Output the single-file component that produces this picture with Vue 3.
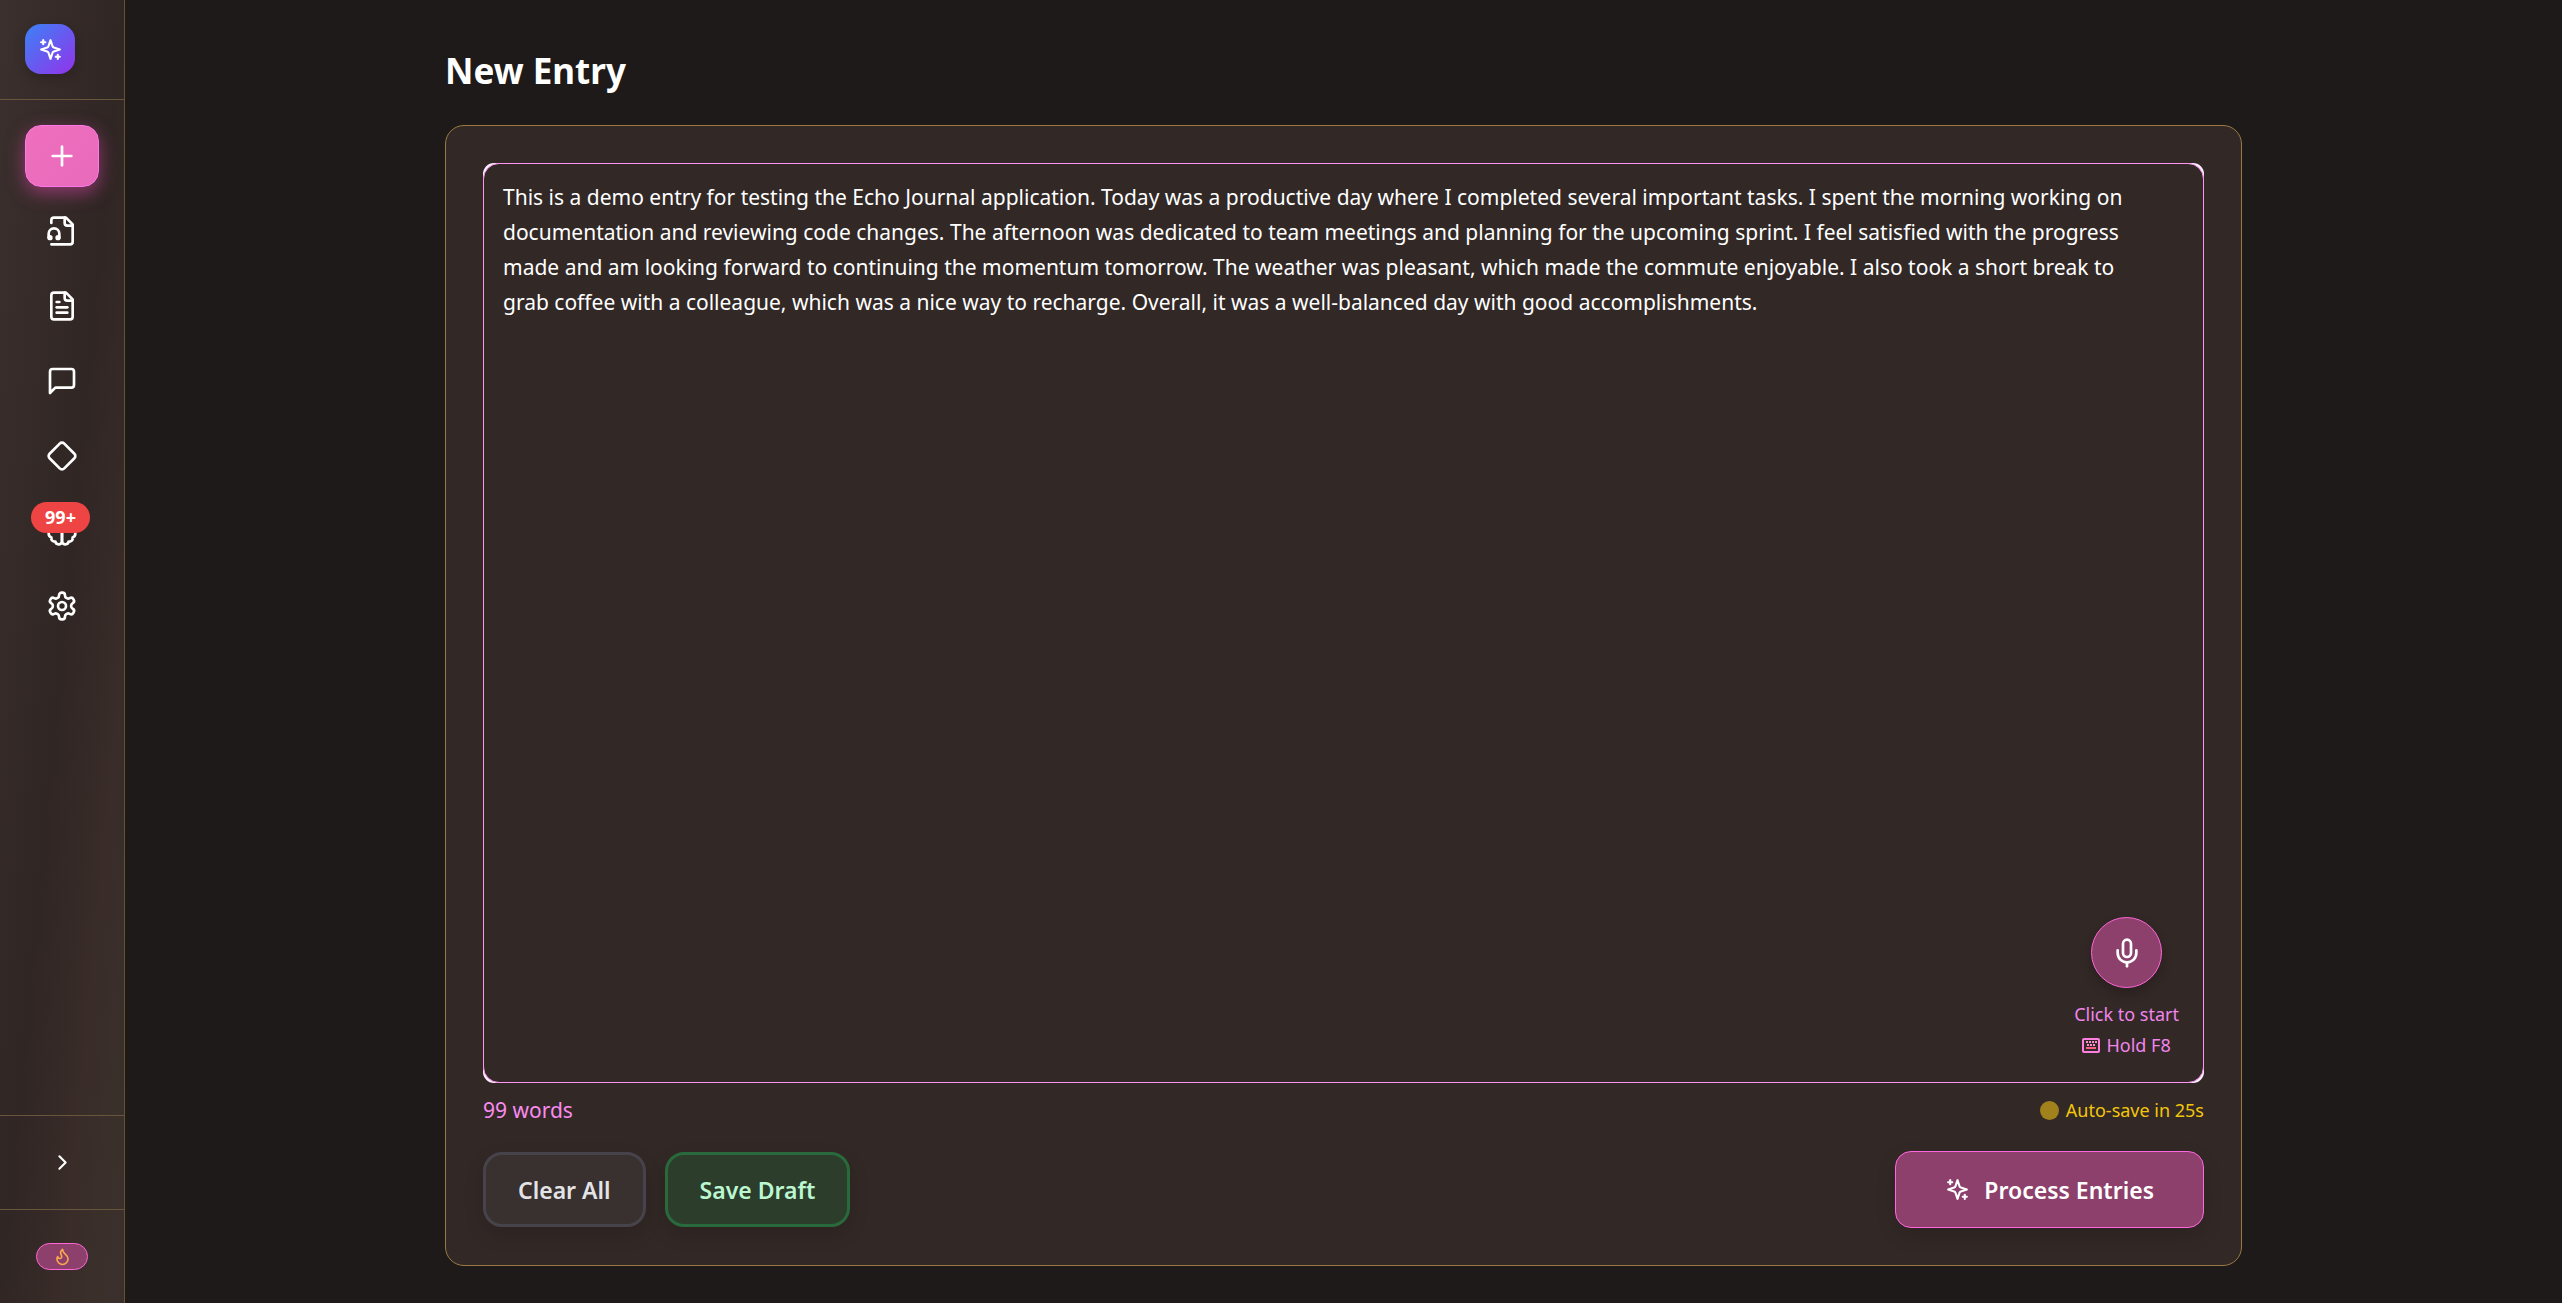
<script setup>
import { ref, computed } from 'vue'

const entry = ref(
  'This is a demo entry for testing the Echo Journal application. Today was a productive day where I completed several important tasks. I spent the morning working on documentation and reviewing code changes. The afternoon was dedicated to team meetings and planning for the upcoming sprint. I feel satisfied with the progress made and am looking forward to continuing the momentum tomorrow. The weather was pleasant, which made the commute enjoyable. I also took a short break to grab coffee with a colleague, which was a nice way to recharge. Overall, it was a well-balanced day with good accomplishments.'
)
const wordCount = ref(99)
const secondsToSave = ref(25)
const saveLabel = computed(() => `Auto-save in ${secondsToSave.value}s`)

const navItems = [
  { name: 'New entry', active: true, paths: ['M5 12h14', 'M12 5v14'] },
  {
    name: 'Audio entries',
    paths: [
      'M4 22h14a2 2 0 0 0 2-2V7l-5-5H6a2 2 0 0 0-2 2v2',
      'M14 2v4a2 2 0 0 0 2 2h4',
      'M2 17v-3a4 4 0 0 1 8 0v3',
      'M2 17a1 1 0 1 0 2 0a1 1 0 1 0-2 0',
      'M8 17a1 1 0 1 0 2 0a1 1 0 1 0-2 0'
    ]
  },
  {
    name: 'Entries',
    paths: [
      'M15 2H6a2 2 0 0 0-2 2v16a2 2 0 0 0 2 2h12a2 2 0 0 0 2-2V7Z',
      'M14 2v4a2 2 0 0 0 2 2h4',
      'M10 9H8',
      'M16 13H8',
      'M16 17H8'
    ]
  },
  { name: 'Chat', paths: ['M21 15a2 2 0 0 1-2 2H7l-4 4V5a2 2 0 0 1 2-2h14a2 2 0 0 1 2 2z'] },
  {
    name: 'Patterns',
    paths: [
      'M2.7 10.3a2.41 2.41 0 0 0 0 3.41l7.59 7.59a2.41 2.41 0 0 0 3.41 0l7.59-7.59a2.41 2.41 0 0 0 0-3.41l-7.59-7.59a2.41 2.41 0 0 0-3.41 0Z'
    ]
  },
  {
    name: 'Insights',
    badge: '99+',
    paths: [
      'M9.5 2A2.5 2.5 0 0 1 12 4.5v15a2.5 2.5 0 0 1-4.96.44 2.5 2.5 0 0 1-2.96-3.08 3 3 0 0 1-.34-5.58 2.5 2.5 0 0 1 1.32-4.24 2.5 2.5 0 0 1 1.98-3A2.5 2.5 0 0 1 9.5 2Z',
      'M14.5 2A2.5 2.5 0 0 0 12 4.5v15a2.5 2.5 0 0 0 4.96.44 2.5 2.5 0 0 0 2.96-3.08 3 3 0 0 0 .34-5.58 2.5 2.5 0 0 0-1.32-4.24 2.5 2.5 0 0 0-1.98-3A2.5 2.5 0 0 0 14.5 2Z'
    ]
  },
  {
    name: 'Settings',
    paths: [
      'M12.22 2h-.44a2 2 0 0 0-2 2v.18a2 2 0 0 1-1 1.73l-.43.25a2 2 0 0 1-2 0l-.15-.08a2 2 0 0 0-2.73.73l-.22.38a2 2 0 0 0 .73 2.73l.15.1a2 2 0 0 1 1 1.72v.51a2 2 0 0 1-1 1.74l-.15.09a2 2 0 0 0-.73 2.73l.22.38a2 2 0 0 0 2.73.73l.15-.08a2 2 0 0 1 2 0l.43.25a2 2 0 0 1 1 1.73V20a2 2 0 0 0 2 2h.44a2 2 0 0 0 2-2v-.18a2 2 0 0 1 1-1.73l.43-.25a2 2 0 0 1 2 0l.15.08a2 2 0 0 0 2.73-.73l.22-.39a2 2 0 0 0-.73-2.73l-.15-.08a2 2 0 0 1-1-1.74v-.5a2 2 0 0 1 1-1.74l.15-.09a2 2 0 0 0 .73-2.73l-.22-.38a2 2 0 0 0-2.73-.73l-.15.08a2 2 0 0 1-2 0l-.43-.25a2 2 0 0 1-1-1.73V4a2 2 0 0 0-2-2z',
      'M9 12a3 3 0 1 0 6 0a3 3 0 1 0-6 0'
    ]
  }
]

const sparkles = [
  'm12 3-1.912 5.813a2 2 0 0 1-1.275 1.275L3 12l5.813 1.912a2 2 0 0 1 1.275 1.275L12 21l1.912-5.813a2 2 0 0 1 1.275-1.275L21 12l-5.813-1.912a2 2 0 0 1-1.275-1.275L12 3Z',
  'M5 3v4',
  'M19 17v4',
  'M3 5h4',
  'M17 19h4'
]
</script>

<template>
  <div class="app">
    <aside class="sidebar">
      <div class="brand">
        <a class="logo" href="#" aria-label="Echo Journal">
          <svg class="icon icon-md" viewBox="0 0 24 24"><path v-for="d in sparkles" :key="d" :d="d" /></svg>
        </a>
      </div>
      <nav class="nav">
        <a
          v-for="item in navItems"
          :key="item.name"
          href="#"
          class="nav-item"
          :class="{ active: item.active }"
          :aria-label="item.name"
        >
          <svg class="icon icon-lg" viewBox="0 0 24 24"><path v-for="d in item.paths" :key="d" :d="d" /></svg>
          <span v-if="item.badge" class="badge">{{ item.badge }}</span>
        </a>
      </nav>
      <div class="expand">
        <button type="button" class="expand-button" aria-label="Expand sidebar">
          <svg class="icon icon-md" viewBox="0 0 24 24"><path d="m9 18 6-6-6-6" /></svg>
        </button>
      </div>
      <div class="streak">
        <span class="streak-pill">
          <svg class="icon icon-sm" viewBox="0 0 24 24">
            <path d="M8.5 14.5A2.5 2.5 0 0 0 11 12c0-1.38-.5-2-1-3-1.072-2.143-.224-4.054 2-6 .5 2.5 2 4.9 4 6.5 2 1.6 3 3.5 3 5.5a7 7 0 1 1-14 0c0-1.153.433-2.294 1-3a2.5 2.5 0 0 0 2.5 2.5z" />
          </svg>
        </span>
      </div>
    </aside>

    <main class="main">
      <div class="content">
        <h1 class="title">New Entry</h1>
        <section class="card">
          <div class="editor">
            <textarea v-model="entry" class="entry" aria-label="Journal entry" spellcheck="false"></textarea>
            <div class="recorder">
              <button type="button" class="mic" aria-label="Start recording">
                <svg class="icon icon-lg" viewBox="0 0 24 24">
                  <path d="M12 2a3 3 0 0 0-3 3v7a3 3 0 0 0 6 0V5a3 3 0 0 0-3-3Z" />
                  <path d="M19 10v2a7 7 0 0 1-14 0v-2" />
                  <path d="M12 19v3" />
                </svg>
              </button>
              <span class="hint">Click to start</span>
              <span class="hint">
                <svg class="keyboard" viewBox="0 0 18 15">
                  <rect class="frame" x="1" y="1" width="16" height="13" rx="1" />
                  <path class="keys" d="M4 4h2M7 4h2M10 4h2M13 4h2M5 7h2M8 7h2M11 7h2" />
                  <path class="space" d="M4 10h10" />
                </svg>
                Hold F8
              </span>
            </div>
          </div>
          <div class="status">
            <span class="words">{{ wordCount }} words</span>
            <span class="autosave"><i class="dot"></i>{{ saveLabel }}</span>
          </div>
          <div class="actions">
            <button type="button" class="button clear">Clear All</button>
            <button type="button" class="button save">Save Draft</button>
            <button type="button" class="button process">
              <svg class="icon icon-md" viewBox="0 0 24 24"><path v-for="d in sparkles" :key="d" :d="d" /></svg>
              Process Entries
            </button>
          </div>
        </section>
      </div>
    </main>
  </div>
</template>

<style>
body {
  margin: 0;
  background: #1e1a19;
}
</style>

<style scoped>
.app {
  display: flex;
  min-height: 100vh;
  background: #1e1a19;
  color: #fff;
  font-family: "Segoe UI", "Noto Sans", "Open Sans", sans-serif;
}
.app *,
.app {
  box-sizing: border-box;
}
.icon {
  display: block;
  flex: none;
  fill: none;
  stroke: currentColor;
  stroke-width: 2;
  stroke-linecap: round;
  stroke-linejoin: round;
}
.icon-sm { width: 19px; height: 19px; }
.icon-md { width: 25px; height: 25px; }
.icon-lg { width: 32px; height: 32px; }

.sidebar {
  display: flex;
  flex-direction: column;
  flex: none;
  width: 125px;
  border-right: 1px solid #69522f;
  background: linear-gradient(to bottom right, #3b302d 0%, #302624 50%, #392c29 75%, #3a302a 90%, #3b2f2d 100%);
}
.brand {
  height: 100px;
  padding: 24px 25px;
  border-bottom: 1px solid #69553c;
}
.logo {
  display: flex;
  align-items: center;
  justify-content: center;
  width: 50px;
  height: 50px;
  border-radius: 16px;
  background: linear-gradient(135deg, #3b82f6, #9333ea);
  box-shadow: 0 4px 12px rgba(0, 0, 0, 0.2);
  color: #fff;
}
.nav {
  display: flex;
  flex: 1;
  flex-direction: column;
  gap: 13px;
  padding: 25px;
}
.nav-item {
  position: relative;
  display: flex;
  align-items: center;
  justify-content: center;
  height: 62px;
  border-radius: 16px;
  color: #fff;
}
.nav-item.active {
  border: 1px solid #ff77e8;
  background: linear-gradient(135deg, #f06fbf, #e86aba);
  box-shadow: 0 6px 18px rgba(236, 72, 180, 0.5);
}
.badge {
  position: absolute;
  top: 2px;
  left: 6px;
  width: 59px;
  border-radius: 16px;
  background: #ef4444;
  font-size: 18px;
  font-weight: 700;
  line-height: 31px;
  text-align: center;
}
.expand {
  display: flex;
  align-items: center;
  justify-content: center;
  height: 94px;
  border-top: 1px solid #69553c;
}
.expand-button {
  padding: 12px;
  border: 0;
  background: none;
  color: #fff;
}
.streak {
  display: flex;
  align-items: center;
  justify-content: center;
  height: 94px;
  border-top: 1px solid #69553c;
}
.streak-pill {
  display: flex;
  align-items: center;
  justify-content: center;
  width: 52px;
  height: 27px;
  border: 1px solid #ff66d8;
  border-radius: 14px;
  background: #8d406b;
  color: #fba94c;
}

.main {
  display: flex;
  flex: 1;
  justify-content: center;
  min-width: 0;
  padding: 37px 24px;
}
.content {
  display: flex;
  flex: 1;
  flex-direction: column;
  gap: 20px;
  max-width: 1797px;
}
.title {
  margin: 0;
  font-size: 35px;
  font-weight: 700;
  line-height: 68px;
}
.card {
  display: flex;
  flex: 1;
  flex-direction: column;
  padding: 37px;
  border: 1px solid #9a7a42;
  border-radius: 19px;
  background: #322826;
}
/* The light backing shows past the rounder textarea as a bright arc at each corner. */
.editor {
  position: relative;
  display: flex;
  flex: 1;
  min-height: 400px;
  border-radius: 11px;
  background: #fff0ff;
}
.entry {
  flex: 1;
  padding: 16px 80px 16px 19px;
  border: 1px solid #ff94f4;
  border-radius: 16px;
  outline: none;
  background: #322826;
  color: #fff;
  font-family: inherit;
  font-size: 21px;
  line-height: 35px;
  resize: none;
}
.recorder {
  position: absolute;
  right: 25px;
  bottom: 22px;
  display: flex;
  flex-direction: column;
  align-items: center;
}
.mic {
  display: flex;
  align-items: center;
  justify-content: center;
  width: 71px;
  height: 71px;
  margin-bottom: 11px;
  padding: 0;
  border: 1px solid #ff66d8;
  border-radius: 50%;
  background: #8d406b;
  box-shadow: 0 5px 12px rgba(0, 0, 0, 0.2);
  color: #fff;
}
.hint {
  display: flex;
  align-items: center;
  gap: 6px;
  color: #f085ec;
  font-size: 18px;
  line-height: 31px;
}
.keyboard {
  width: 18px;
  height: 15px;
  fill: none;
}
.frame { stroke: #ff7fe0; stroke-width: 2; }
.keys { stroke: #ff8fd0; stroke-width: 2; }
.space { stroke: #ff5c86; stroke-width: 2; }
.status {
  display: flex;
  align-items: center;
  justify-content: space-between;
  height: 68px;
  padding-bottom: 14px;
}
.words {
  color: #f98bf0;
  font-size: 21px;
}
.autosave {
  display: flex;
  align-items: center;
  gap: 7px;
  color: #f2c60c;
  font-size: 18px;
}
.dot {
  width: 19px;
  height: 19px;
  border-radius: 50%;
  background: #a1811c;
}
.actions {
  display: flex;
  align-items: center;
  gap: 19px;
}
.button {
  display: flex;
  align-items: center;
  justify-content: center;
  height: 75px;
  padding: 0 32px;
  border: 3px solid;
  border-radius: 19px;
  box-shadow: 0 8px 20px rgba(0, 0, 0, 0.12);
  font-family: inherit;
  font-size: 23px;
  font-weight: 600;
}
.clear {
  border-color: #47434b;
  background: #383130;
  color: #e4e4e7;
}
.save {
  border-color: #296a3c;
  background: #2c3d2c;
  color: #bbf7d0;
}
.process {
  gap: 14px;
  height: 77px;
  margin-left: auto;
  padding: 0 49px;
  border: 1px solid #ff66e0;
  border-radius: 16px;
  background: #8d406b;
  color: #fff;
}
</style>
